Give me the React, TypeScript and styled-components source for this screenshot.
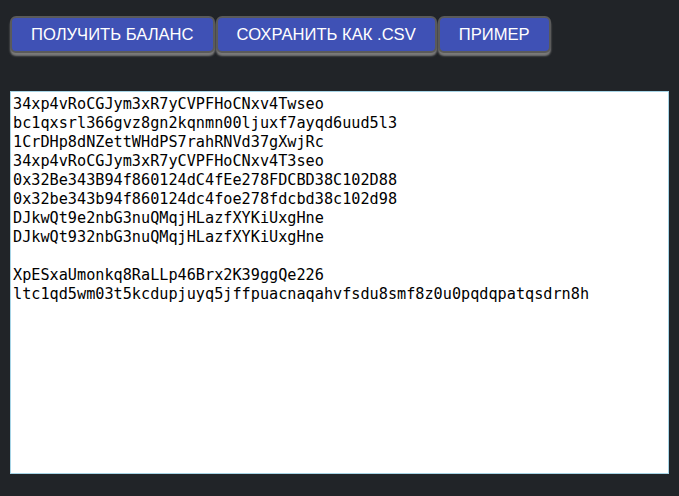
import React from "react";
import styled, { createGlobalStyle } from "styled-components";

const Global = createGlobalStyle`
  html, body { margin: 0; padding: 0; background: #212428; }
  body { font-family: "Liberation Sans", Arial, sans-serif; }
`;

const Page = styled.div`
  padding: 16px 10px 0 10px;
  display: flex;
  flex-direction: column;
  gap: 38px;
`;

const Toolbar = styled.div`
  display: flex;
  gap: 1px;
`;

const Button = styled.button`
  height: 37px;
  margin: 0;
  padding: 0 19px;
  background: #3f51b5;
  color: #ffffff;
  font-family: "Liberation Sans", Arial, sans-serif;
  font-size: 16.6px;
  text-transform: uppercase;
  border: 2px solid #5a5a5a;
  border-radius: 6px;
  box-shadow: 0 3px 2px #7a7a7a;
  cursor: pointer;
`;

const Area = styled.textarea`
  box-sizing: border-box;
  width: 659px;
  height: 383px;
  margin: 0;
  padding: 3px 2px 2px 2px;
  border: 1px solid #a6d4e6;
  background: #ffffff;
  color: #000;
  font-family: "DejaVu Sans Mono", "Liberation Mono", monospace;
  font-size: 15.2px;
  line-height: 19px;
  resize: none;
  outline: none;
`;

const text = `34xp4vRoCGJym3xR7yCVPFHoCNxv4Twseo
bc1qxsrl366gvz8gn2kqnmn00ljuxf7ayqd6uud5l3
1CrDHp8dNZettWHdPS7rahRNVd37gXwjRc
34xp4vRoCGJym3xR7yCVPFHoCNxv4T3seo
0x32Be343B94f860124dC4fEe278FDCBD38C102D88
0x32be343b94f860124dc4foe278fdcbd38c102d98
DJkwQt9e2nbG3nuQMqjHLazfXYKiUxgHne
DJkwQt932nbG3nuQMqjHLazfXYKiUxgHne

XpESxaUmonkq8RaLLp46Brx2K39ggQe226
ltc1qd5wm03t5kcdupjuyq5jffpuacnaqahvfsdu8smf8z0u0pqdqpatqsdrn8h`;

export default function App() {
  return (
    <>
      <Global />
      <Page>
        <Toolbar>
          <Button>Получить баланс</Button>
          <Button>Сохранить как .csv</Button>
          <Button>Пример</Button>
        </Toolbar>
        <Area defaultValue={text} spellCheck={false} />
      </Page>
    </>
  );
}
